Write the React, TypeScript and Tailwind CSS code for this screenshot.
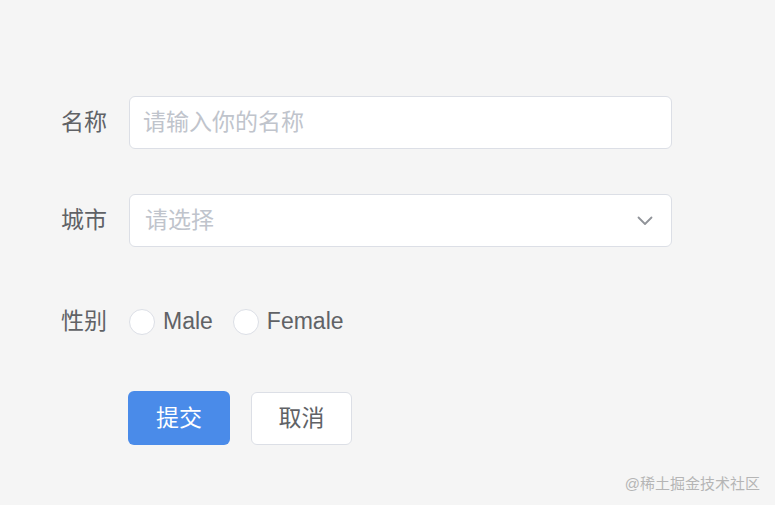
const font = { fontFamily: '"Liberation Sans", "Noto Sans CJK SC", sans-serif' };

function Label({ children }: { children: React.ReactNode }) {
  return <div className="w-[107px] shrink-0 text-right text-[23px] text-[#606266]">{children}</div>;
}

function Radio({ label }: { label: string }) {
  return (
    <label className="flex items-center gap-[8px]">
      <span className="h-[26px] w-[26px] rounded-full border border-[#dcdfe6] bg-white" />
      <span className="text-[23px] text-[#606266]">{label}</span>
    </label>
  );
}

export default function App() {
  return (
    <div className="relative h-[505px] w-[775px] overflow-hidden bg-[#f5f5f5]" style={font}>
      <div className="flex flex-col pt-[96px]">
        {/* 名称 */}
        <div className="flex h-[53px] items-center">
          <Label>名称</Label>
          <div className="ml-[22px] flex h-[53px] w-[543px] items-center rounded-[6px] border border-[#dcdfe6] bg-white px-[13px] text-[23px] text-[#c0c4cc]">
            请输入你的名称
          </div>
        </div>

        {/* 城市 */}
        <div className="mt-[45px] flex h-[53px] items-center">
          <Label>城市</Label>
          <div className="ml-[22px] flex h-[53px] w-[543px] items-center justify-between rounded-[6px] border border-[#dcdfe6] bg-white pl-[15px] pr-[18px] text-[23px] text-[#c0c4cc]">
            <span>请选择</span>
            <svg width="16" height="10" viewBox="0 0 16 10" fill="none">
              <path d="M1.5 1.5 L8 8 L14.5 1.5" stroke="#909399" strokeWidth="1.8" strokeLinecap="round" strokeLinejoin="round" />
            </svg>
          </div>
        </div>

        {/* 性别 */}
        <div className="mt-[48px] flex h-[53px] items-center">
          <Label>性别</Label>
          <div className="ml-[22px] flex items-center gap-[20px]">
            <Radio label="Male" />
            <Radio label="Female" />
          </div>
        </div>

        {/* buttons */}
        <div className="mt-[43px] flex h-[54px] items-center pl-[128px] gap-[21px]">
          <button className="h-[54px] w-[102px] rounded-[6px] bg-[#4a8be9] text-[23px] text-white">提交</button>
          <button className="h-[53px] w-[101px] rounded-[6px] border border-[#dcdfe6] bg-white text-[23px] text-[#606266]">取消</button>
        </div>
      </div>

      {/* watermark */}
      <div className="absolute right-[15px] top-[473px] text-[15px] text-[#b5b5b5]">@稀土掘金技术社区</div>
    </div>
  );
}
